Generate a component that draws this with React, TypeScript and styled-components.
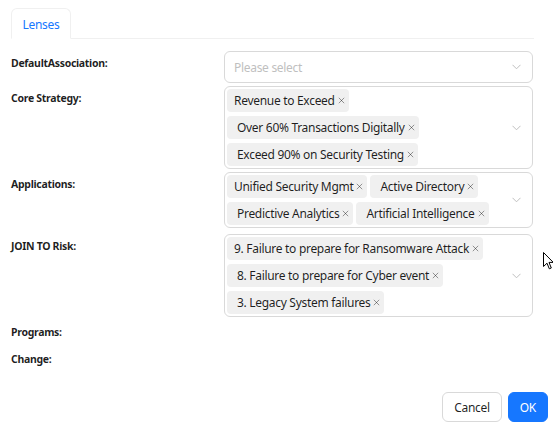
import React from 'react'
import styled, { createGlobalStyle } from 'styled-components'

const GlobalStyle = createGlobalStyle`
  body {
    margin: 0;
    font-family: "Noto Sans", "Liberation Sans", sans-serif;
    letter-spacing: -0.3px;
    color: rgba(0, 0, 0, 0.88);
    background: #fff;
  }
`

const Page = styled.div`
  position: relative;
  width: 553px;
  height: 427px;
  box-sizing: border-box;
  padding: 8px 5px 0 11px;
`
const TabBar = styled.div`
  display: flex;
  width: 523px;
  border-bottom: 1px solid #f0f0f0;
`
const Tab = styled.div`
  height: 31px;
  width: 60px;
  box-sizing: border-box;
  display: flex;
  align-items: center;
  justify-content: center;
  border: 1px solid #f0f0f0;
  border-bottom-color: #fff;
  border-radius: 6px 6px 0 0;
  margin-bottom: -1px;
  color: #1677ff;
  font-size: 12px;
  padding-top: 2px;
`
const Form = styled.div`
  display: flex;
  flex-direction: column;
  gap: 3px;
  margin-top: 12px;
`
const Row = styled.div<{ $offset?: number }>`
  display: flex;
  min-height: 23px;
  margin-top: ${(p) => p.$offset ?? 0}px;
`
const Label = styled.div`
  width: 213px;
  flex-shrink: 0;
  line-height: 24px;
  font-size: 10.5px;
  font-weight: 700;
`
const Field = styled.div`
  width: 309px;
  min-height: 32px;
  box-sizing: border-box;
  border: 1px solid #d9d9d9;
  border-radius: 6px;
  display: flex;
  align-items: center;
  padding: 2px 11px 2px 2px;
`
const Tags = styled.div`
  flex: 1;
  display: flex;
  flex-wrap: wrap;
  gap: 4px 3px;
`
const Placeholder = styled.span`
  flex: 1;
  padding-left: 7px;
  font-size: 12px;
  color: #bfbfbf;
`
const Tag = styled.span<{ $lead?: boolean }>`
  height: 23px;
  display: inline-flex;
  align-items: center;
  gap: 3px;
  padding: 0 4px 0 ${(p) => (p.$lead ? 7 : 10)}px;
  background: #f0f0f0;
  border-radius: 4px;
  font-size: 12px;
  white-space: nowrap;
`
const Close = styled.svg`
  width: 7px;
  height: 7px;
  stroke: rgba(0, 0, 0, 0.4);
  stroke-width: 1;
`
const Chevron = styled.svg`
  width: 9px;
  height: 6px;
  flex-shrink: 0;
  stroke: #bfbfbf;
  stroke-width: 1;
  fill: none;
`
const Footer = styled.div`
  display: flex;
  justify-content: flex-end;
  gap: 6px;
  margin-top: 21px;
`
const Button = styled.button<{ $primary?: boolean }>`
  height: 30px;
  padding: 0 11px;
  border-radius: 6px;
  font-family: inherit;
  letter-spacing: inherit;
  font-size: 12px;
  border: 1px solid ${(p) => (p.$primary ? '#1677ff' : '#d9d9d9')};
  background: ${(p) => (p.$primary ? '#1677ff' : '#fff')};
  color: ${(p) => (p.$primary ? '#fff' : 'rgba(0, 0, 0, 0.88)')};
`
const Cursor = styled.svg`
  position: absolute;
  left: 543px;
  top: 252px;
  width: 11px;
  height: 18px;
`

const DownArrow = () => (
  <Chevron viewBox="0 0 9 6">
    <path d="M0.5 0.8 L4.5 4.8 L8.5 0.8" />
  </Chevron>
)

const TagItem = ({ text, lead }: { text: string; lead?: boolean }) => (
  <Tag $lead={lead}>
    {text}
    <Close viewBox="0 0 7 7">
      <path d="M0.8 0.8 L6.2 6.2 M6.2 0.8 L0.8 6.2" />
    </Close>
  </Tag>
)

const rows: { label: string; tags?: string[]; placeholder?: string; offset?: number }[] = [
  { label: 'DefaultAssociation:', placeholder: 'Please select' },
  {
    label: 'Core Strategy:',
    tags: ['Revenue to Exceed', 'Over 60% Transactions Digitally', 'Exceed 90% on Security Testing'],
  },
  {
    label: 'Applications:',
    tags: ['Unified Security Mgmt', 'Active Directory', 'Predictive Analytics', 'Artificial Intelligence'],
  },
  {
    label: 'JOIN TO Risk:',
    offset: 3,
    tags: [
      '9. Failure to prepare for Ransomware Attack',
      '8. Failure to prepare for Cyber event',
      '3. Legacy System failures',
    ],
  },
  { label: 'Programs:' },
  { label: 'Change:' },
]

export default function App() {
  return (
    <Page>
      <GlobalStyle />
      <TabBar>
        <Tab>Lenses</Tab>
      </TabBar>
      <Form>
        {rows.map((r) => (
          <Row key={r.label} $offset={r.offset}>
            <Label>{r.label}</Label>
            {r.placeholder && (
              <Field>
                <Placeholder>{r.placeholder}</Placeholder>
                <DownArrow />
              </Field>
            )}
            {r.tags && (
              <Field>
                <Tags>
                  {r.tags.map((t, i) => (
                    <TagItem key={t} text={t} lead={i === 0} />
                  ))}
                </Tags>
                <DownArrow />
              </Field>
            )}
          </Row>
        ))}
      </Form>
      <Footer>
        <Button>Cancel</Button>
        <Button $primary>OK</Button>
      </Footer>
      <Cursor viewBox="0 0 11 18">
        <path d="M0.5 0.5 L0.5 14.5 L4 11.2 L6.3 16.8 L8.3 16 L6 10.4 L10.3 10.4 Z" fill="#fff" stroke="#000" strokeWidth="1" />
      </Cursor>
    </Page>
  )
}
